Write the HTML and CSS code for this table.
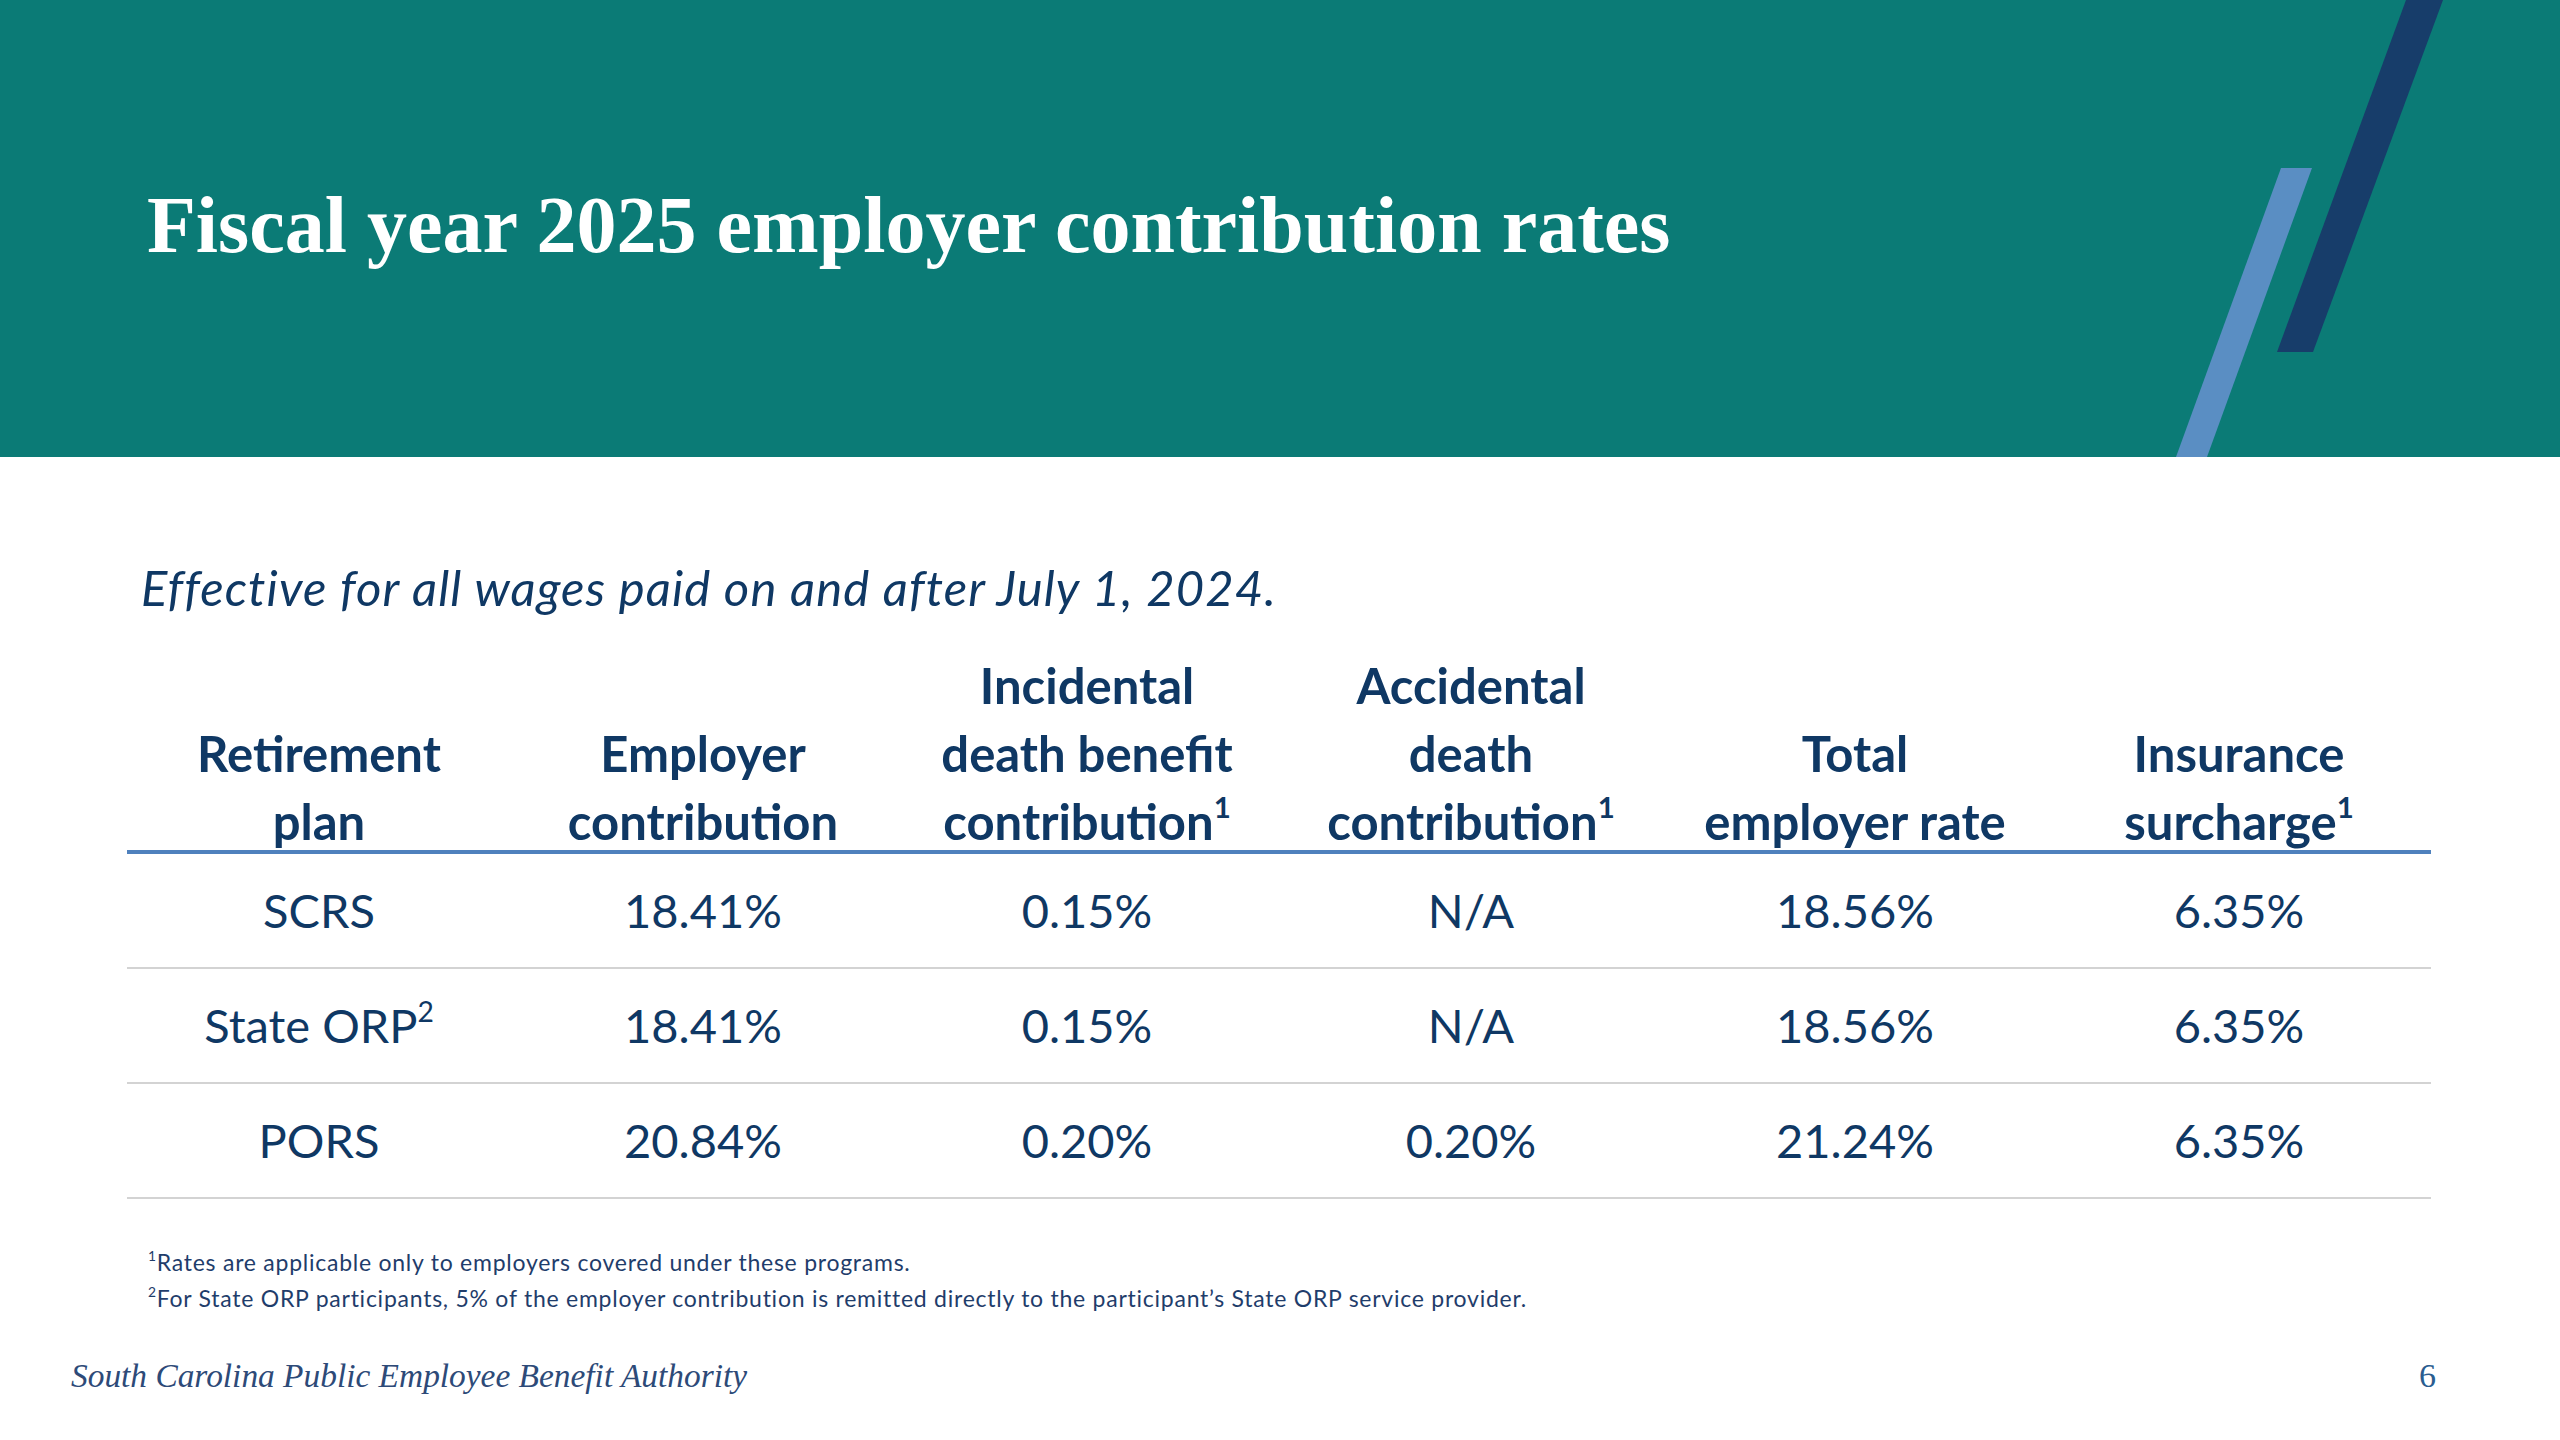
FILE: index.html
```html
<!DOCTYPE html>
<html lang="en">
<head>
<meta charset="utf-8">
<title>Fiscal year 2025 employer contribution rates</title>
<link rel="stylesheet" href="styles.css">
</head>
<body>
<div class="slide">
  <header class="band">
    <h1 class="title">Fiscal year 2025 employer contribution rates</h1>
    <svg class="slashes" viewBox="0 0 460 457" width="460" height="457" aria-hidden="true">
      <polygon points="306,0 343,0 213,352 177,352" fill="#173d6a"/>
      <polygon points="181,168 212,168 107,457 76,457" fill="#5a8ec3"/>
    </svg>
  </header>

  <main class="content">
    <p class="subtitle">Effective for all wages paid on and after July 1, 2024.</p>

    <table class="rates">
      <thead>
        <tr>
          <th><div class="th-text">Retirement<br>plan</div></th>
          <th><div class="th-text">Employer<br>contribution</div></th>
          <th><div class="th-text">Incidental<br>death benefit<br>contribution<sup>1</sup></div></th>
          <th><div class="th-text">Accidental<br>death<br>contribution<sup>1</sup></div></th>
          <th><div class="th-text">Total<br>employer rate</div></th>
          <th><div class="th-text">Insurance<br>surcharge<sup>1</sup></div></th>
        </tr>
      </thead>
      <tbody>
        <tr>
          <td>SCRS</td><td>18.41%</td><td>0.15%</td><td>N/A</td><td>18.56%</td><td>6.35%</td>
        </tr>
        <tr>
          <td>State ORP<sup>2</sup></td><td>18.41%</td><td>0.15%</td><td>N/A</td><td>18.56%</td><td>6.35%</td>
        </tr>
        <tr>
          <td>PORS</td><td>20.84%</td><td>0.20%</td><td>0.20%</td><td>21.24%</td><td>6.35%</td>
        </tr>
      </tbody>
    </table>

    <div class="notes">
      <p><sup>1</sup>Rates are applicable only to employers covered under these programs.</p>
      <p><sup>2</sup>For State ORP participants, 5% of the employer contribution is remitted directly to the participant’s State ORP service provider.</p>
    </div>
  </main>

  <footer class="footer">
    <span class="org">South Carolina Public Employee Benefit Authority</span>
    <span class="page-num">6</span>
  </footer>
</div>
</body>
</html>
```

FILE: styles.css
```css
html, body {
  margin: 0;
  padding: 0;
  background: #ffffff;
}

.slide {
  width: 2560px;
  height: 1440px;
  overflow: hidden;
  background: #ffffff;
  font-family: Lato, "Open Sans", sans-serif;
  color: #0f3864;
}

.band {
  position: relative;
  height: 457px;
  background: #0b7b76;
  padding: 185px 0 0 147px;
  box-sizing: border-box;
}

.title {
  margin: 0;
  font-family: "Liberation Serif", "Times New Roman", serif;
  font-weight: bold;
  font-size: 80px;
  line-height: 1;
  color: #ffffff;
}

.slashes {
  position: absolute;
  top: 0;
  right: 0;
  display: block;
}

.content {
  padding: 0 129px 0 127px;
}

.subtitle {
  margin: 101px 0 0 14px;
  font-style: italic;
  font-size: 49px;
  letter-spacing: 1.1px;
  line-height: 1.2;
  color: #0f3864;
}

.rates {
  width: 100%;
  margin-top: 34px;
  border-collapse: collapse;
  table-layout: fixed;
}

.rates th {
  vertical-align: bottom;
  text-align: center;
  font-weight: bold;
  font-size: 49px;
  line-height: 68px;
  padding: 0;
  border-bottom: 4px solid #4f81bd;
  color: #0f3864;
}

.th-text {
  margin-bottom: -5px;
}

.rates td {
  height: 113px;
  padding: 0;
  text-align: center;
  vertical-align: middle;
  font-size: 47px;
  border-bottom: 2px solid #d3d3d3;
  color: #0f3864;
}

.rates sup {
  font-size: 0.6em;
  line-height: 0;
  vertical-align: 0.75em;
}

.notes {
  margin-top: 45px;
  margin-left: 21px;
  font-size: 23px;
  letter-spacing: 0.75px;
  line-height: 36px;
  color: #1f3d6b;
}

.notes p {
  margin: 0;
}

.notes sup {
  font-size: 0.6em;
  line-height: 0;
  vertical-align: 0.7em;
}

.footer {
  display: flex;
  justify-content: space-between;
  align-items: baseline;
  margin-top: 43px;
  padding: 0 124px 0 71px;
  font-family: "Liberation Serif", "Times New Roman", serif;
}

.org {
  font-style: italic;
  font-size: 33.4px;
  line-height: 1;
  color: #2d4a78;
}

.page-num {
  font-size: 34px;
  line-height: 1;
  color: #2a5d90;
}
```
